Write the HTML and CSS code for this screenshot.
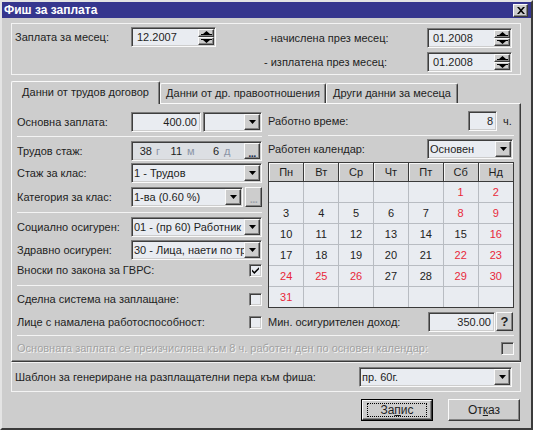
FILE: index.html
```html
<!DOCTYPE html>
<html>
<head>
<meta charset="utf-8">
<title>Фиш за заплата</title>
<link rel="stylesheet" href="styles.css">
</head>
<body>
<div class="window">
  <div class="titlebar">
    <span class="title">Фиш за заплата</span>
    <span class="close raised"><svg width="8" height="7" viewBox="0 0 8 7"><path d="M0 0h2l2 2.3L6 0h2L5 3.5 8 7H6L4 4.7 2 7H0l3-3.5z" fill="#000"/></svg></span>
  </div>
  <div class="content">
    <div class="group top-group">
      <div class="tg-left">
        <span class="lbl w116">Заплата за месец:</span>
        <div class="spin inset"><span class="spin-text">12.2007</span>
          <span class="spin-btns"><span class="raised half"><svg width="11" height="5"><path d="M0 3h11v1H0zM2 3l3.5-3L9 3z" fill="#000"/></svg></span><span class="raised half"><svg width="11" height="5"><path d="M0 0h11v1H0zM2 1l3.5 3L9 1z" fill="#000"/></svg></span></span>
        </div>
      </div>
      <div class="tg-right">
        <div class="tg-row">
          <span class="lbl w163">- начислена през месец:</span>
          <div class="spin inset"><span class="spin-text">01.2008</span>
            <span class="spin-btns"><span class="raised half"><svg width="11" height="5"><path d="M0 3h11v1H0zM2 3l3.5-3L9 3z" fill="#000"/></svg></span><span class="raised half"><svg width="11" height="5"><path d="M0 0h11v1H0zM2 1l3.5 3L9 1z" fill="#000"/></svg></span></span>
          </div>
        </div>
        <div class="tg-row">
          <span class="lbl w163">- изплатена през месец:</span>
          <div class="spin inset"><span class="spin-text">01.2008</span>
            <span class="spin-btns"><span class="raised half"><svg width="11" height="5"><path d="M0 3h11v1H0zM2 3l3.5-3L9 3z" fill="#000"/></svg></span><span class="raised half"><svg width="11" height="5"><path d="M0 0h11v1H0zM2 1l3.5 3L9 1z" fill="#000"/></svg></span></span>
          </div>
        </div>
      </div>
    </div>

    <div class="tabs">
      <div class="tab tab1 selected">Данни от трудов договор</div>
      <div class="tab tab2">Данни от др. правоотношения</div>
      <div class="tab tab3">Други данни за месеца</div>
    </div>

    <div class="panel">
      <div class="cols">
        <div class="lcol">
          <div class="row r20 mt8">
            <span class="lbl w114">Основна заплата:</span>
            <div class="field inset w70"><span class="num-r">400.00</span></div>
            <div class="combo inset w59 ml2"><span class="combo-text"></span><span class="arrow raised"><svg width="7" height="4"><path d="M0 0h7L3.5 4z" fill="#000"/></svg></span></div>
          </div>
          <div class="sep mt4 mb4"></div>
          <div class="row r20">
            <span class="lbl w114">Трудов стаж:</span>
            <div class="field inset stazh w131">
              <span class="n n1">38</span><span class="u u1">г</span>
              <span class="n n2">11</span><span class="u u2">м</span>
              <span class="n n3">6</span><span class="u u3">д</span>
              <span class="dots raised">...</span>
            </div>
          </div>
          <div class="row r20 mt2">
            <span class="lbl w114">Стаж за клас:</span>
            <div class="combo inset w131"><span class="combo-text">1 - Трудов</span><span class="arrow raised"><svg width="7" height="4"><path d="M0 0h7L3.5 4z" fill="#000"/></svg></span></div>
          </div>
          <div class="row r20 mt4">
            <span class="lbl w114">Категория за клас:</span>
            <div class="combo inset w112"><span class="combo-text">1-ва (0.60 %)</span><span class="arrow raised"><svg width="7" height="4"><path d="M0 0h7L3.5 4z" fill="#000"/></svg></span></div>
            <span class="dots-btn raised disabled ml2">...</span>
          </div>
          <div class="sep mt5 mb4"></div>
          <div class="row r20">
            <span class="lbl w114">Социално осигурен:</span>
            <div class="combo inset w131"><span class="combo-text">01 - (пр 60) Работник</span><span class="arrow raised"><svg width="7" height="4"><path d="M0 0h7L3.5 4z" fill="#000"/></svg></span></div>
          </div>
          <div class="row r20 mt3">
            <span class="lbl w114">Здравно осигурен:</span>
            <div class="combo inset w131"><span class="combo-text">30 - Лица, наети по тр</span><span class="arrow raised"><svg width="7" height="4"><path d="M0 0h7L3.5 4z" fill="#000"/></svg></span></div>
          </div>
          <div class="row r14 mt3 between">
            <span class="lbl">Вноски по закона за ГВРС:</span>
            <span class="check inset"><svg width="9" height="9" viewBox="0 0 9 9"><path d="M1 3.5l2.3 2.3L8 1.2v2L3.3 7.9 1 5.6z" fill="#000"/></svg></span>
          </div>
          <div class="sep mt8 mb6"></div>
          <div class="row r14 between">
            <span class="lbl">Сделна система на заплащане:</span>
            <span class="check inset"></span>
          </div>
          <div class="row r14 mt9 between">
            <span class="lbl">Лице с намалена работоспособност:</span>
            <span class="check inset"></span>
          </div>
        </div>

        <div class="rcol">
          <div class="row r20 mt7">
            <span class="lbl grow">Работно време:</span>
            <div class="field inset w29"><span class="num-r">8</span></div>
            <span class="unit-h">ч.</span>
          </div>
          <div class="sep mt4 mb3"></div>
          <div class="row r20">
            <span class="lbl grow">Работен календар:</span>
            <div class="combo inset w86 mr1"><span class="combo-text">Основен</span><span class="arrow raised"><svg width="7" height="4"><path d="M0 0h7L3.5 4z" fill="#000"/></svg></span></div>
          </div>
          <div class="cal mt3">
            <table>
              <thead>
                <tr><th>Пн</th><th>Вт</th><th>Ср</th><th>Чт</th><th>Пт</th><th>Сб</th><th>Нд</th></tr>
              </thead>
              <tbody>
                <tr><td></td><td></td><td></td><td></td><td></td><td class="h">1</td><td class="h">2</td></tr>
                <tr><td>3</td><td>4</td><td>5</td><td>6</td><td>7</td><td class="h">8</td><td class="h">9</td></tr>
                <tr><td>10</td><td>11</td><td>12</td><td>13</td><td>14</td><td>15</td><td class="h">16</td></tr>
                <tr><td>17</td><td>18</td><td>19</td><td>20</td><td>21</td><td class="h">22</td><td class="h">23</td></tr>
                <tr><td class="h">24</td><td class="h">25</td><td class="h">26</td><td>27</td><td>28</td><td class="h">29</td><td class="h">30</td></tr>
                <tr><td class="h">31</td><td></td><td></td><td></td><td></td><td></td><td></td></tr>
              </tbody>
            </table>
          </div>
          <div class="row r19 mt4">
            <span class="lbl grow">Мин. осигурителен доход:</span>
            <div class="field inset w67"><span class="num-r">350.00</span></div>
            <span class="q-btn raised mr1">?</span>
          </div>
        </div>
      </div>
      <div class="sep mt4 mb6"></div>
      <div class="row r13 between">
        <span class="lbl disabled-text">Основната заплата се преизчислява към 8 ч. работен ден по основен календар:</span>
        <span class="check inset check-disabled"></span>
      </div>
    </div>

    <div class="group bottom-group">
      <span class="lbl grow">Шаблон за генериране на разплащателни пера към фиша:</span>
      <div class="combo inset w153"><span class="combo-text">пр. 60г.</span><span class="arrow raised"><svg width="7" height="4"><path d="M0 0h7L3.5 4z" fill="#000"/></svg></span></div>
    </div>

    <div class="buttons">
      <div class="btn default"><span class="btn-inner raised"><span class="focus">За<u>п</u>ис</span></span></div>
      <div class="btn"><span class="btn-inner raised">От<u>к</u>аз</span></div>
    </div>
  </div>
</div>
</body>
</html>
```

FILE: styles.css
```css
* { box-sizing: border-box; }
html, body { margin: 0; padding: 0; }
body {
  width: 533px;
  height: 430px;
  overflow: hidden;
  background: #cdcdcd;
  font-family: "Liberation Sans", Arial, sans-serif;
  font-size: 11px;
  color: #1e1e1e;
}

.window {
  width: 533px;
  height: 430px;
  border: 2px solid;
  border-color: #e4e4e4 #3a3a3a #3a3a3a #e4e4e4;
  background: #cdcdcd;
  display: flex;
  flex-direction: column;
}

.titlebar {
  height: 16px;
  background: #36368e;
  display: flex;
  align-items: center;
  justify-content: space-between;
  padding: 0 3px 0 2px;
}
.title {
  color: #fff;
  font-weight: bold;
  font-size: 12px;
}
.close {
  width: 15px;
  height: 13px;
  display: flex;
  align-items: center;
  justify-content: center;
}

.raised {
  background: #cdcdcd;
  border: 1px solid;
  border-color: #fafafa #3a3a3a #3a3a3a #fafafa;
  box-shadow: inset -1px -1px #858585;
}
.inset {
  border: 1px solid;
  border-color: #7c7c7c #fafafa #fafafa #7c7c7c;
  box-shadow: inset 1px 1px #3e3e3e, inset -1px -1px #cdcdcd;
  padding: 1px;
  background: #e9ecf1;
}

.content {
  flex: 1;
  padding: 5px 10px 0 9px;
  display: flex;
  flex-direction: column;
}

.group {
  border: 1px solid #f3f3f3;
}
.top-group {
  height: 52px;
  display: flex;
}
.tg-left {
  width: 252px;
  padding: 3px 0 0 3px;
  display: flex;
  align-items: flex-start;
}
.tg-right {
  padding-top: 4px;
  display: flex;
  flex-direction: column;
  gap: 4px;
}
.tg-row { display: flex; }

.lbl {
  white-space: nowrap;
  line-height: 20px;
}
.w116 { width: 116px; flex: none; }
.w163 { width: 163px; flex: none; }
.w114 { width: 114px; flex: none; }
.grow { flex: 1; }

.spin {
  width: 85px;
  height: 20px;
  display: flex;
}
.spin-text {
  flex: 1;
  padding-left: 4px;
  line-height: 16px;
}
.spin-btns {
  width: 16px;
  display: flex;
  flex-direction: column;
}
.half {
  height: 8px;
  display: flex;
  align-items: center;
  justify-content: center;
}
.half svg { display: block; }

.tabs {
  margin-top: 6px;
  height: 22px;
  display: flex;
  align-items: flex-end;
}
.tab {
  height: 20px;
  border-top: 1px solid #fafafa;
  border-left: 1px solid #fafafa;
  border-right: 1px solid #3a3a3a;
  border-radius: 2px 2px 0 0;
  box-shadow: inset -1px 0 #858585;
  text-align: center;
  line-height: 19px;
  white-space: nowrap;
}
.tab1 { width: 149px; }
.tab2 { width: 166px; }
.tab3 { width: 132px; }
.tab.selected {
  height: 23px;
  margin-bottom: -1px;
  line-height: 21px;
  background: #cdcdcd;
  position: relative;
  z-index: 1;
}

.panel {
  height: 259px;
  border: 1px solid;
  border-color: #fafafa #3a3a3a #3a3a3a #fafafa;
  box-shadow: inset -1px -1px #858585;
  padding: 0 6px 0 5px;
}
.cols {
  display: grid;
  grid-template-columns: 245px 246px;
  column-gap: 6px;
  align-items: start;
}
.lcol, .rcol { display: flex; flex-direction: column; }

.row { display: flex; align-items: center; }
.r20 { height: 20px; }
.r19 { height: 19px; }
.r14 { height: 14px; }
.r13 { height: 13px; }
.between { justify-content: space-between; }

.mt2 { margin-top: 2px; }
.mt3 { margin-top: 3px; }
.mt4 { margin-top: 4px; }
.mt5 { margin-top: 5px; }
.mt7 { margin-top: 7px; }
.mt8 { margin-top: 8px; }
.mt9 { margin-top: 9px; }
.mb3 { margin-bottom: 3px; }
.mb4 { margin-bottom: 4px; }
.mb6 { margin-bottom: 6px; }
.ml2 { margin-left: 2px; }
.mr1 { margin-right: 1px; }

.sep {
  height: 1px;
  background: #f3f3f3;
}

.field {
  height: 20px;
  display: flex;
  align-items: center;
}
.num-r {
  flex: 1;
  text-align: right;
  padding-right: 2px;
}
.w70 { width: 70px; }
.w59 { width: 59px; }
.w131 { width: 131px; }
.w112 { width: 112px; }
.w29 { width: 29px; }
.w67 { width: 67px; }
.w86 { width: 86px; }
.w153 { width: 153px; }

.stazh {
  background: #dcdfe3;
  padding: 1px;
}
.n {
  display: inline-block;
  text-align: right;
  flex: none;
}
.u {
  display: inline-block;
  color: #8a94a6;
  flex: none;
}
.n1 { width: 19px; }
.u1 { width: 16px; padding-left: 4px; }
.n2 { width: 14px; }
.u2 { width: 23px; padding-left: 5px; }
.n3 { width: 14px; }
.u3 { width: 14px; padding-left: 5px; }
.dots {
  margin-left: auto;
  width: 16px;
  height: 16px;
  font-weight: bold;
  font-size: 11px;
  line-height: 18px;
  text-align: center;
  letter-spacing: -0.5px;
  overflow: hidden;
  color: #203050;
}
.dots-btn {
  width: 17px;
  height: 20px;
  flex: none;
  font-weight: bold;
  line-height: 22px;
  text-align: center;
  letter-spacing: -0.5px;
  overflow: hidden;
}
.dots-btn.disabled { color: #9ea3ab; }

.combo {
  height: 20px;
  display: flex;
  align-items: stretch;
  flex: none;
}
.combo-text {
  flex: 1;
  min-width: 0;
  overflow: hidden;
  white-space: nowrap;
  line-height: 16px;
  padding-left: 1px;
}
.arrow {
  width: 16px;
  flex: none;
  display: flex;
  align-items: center;
  justify-content: center;
}
.arrow svg { display: block; }

.check {
  width: 13px;
  height: 13px;
  flex: none;
  display: flex;
  align-items: center;
  justify-content: center;
  padding: 0;
}
.check svg { display: block; }
.check-disabled { background: #cdcdcd; }

.unit-h {
  width: 11px;
  margin-left: 6px;
  line-height: 20px;
}

.cal {
  border: 1px solid #3a3a3a;
  background: #e9ecf1;
}
.cal table {
  width: 100%;
  border-collapse: collapse;
  border-style: hidden;
  table-layout: fixed;
}
.cal th {
  height: 18px;
  padding: 0;
  font-weight: normal;
  background: #cdcdcd;
  border-right: 1px solid #3a3a3a;
  border-bottom: 1px solid #3a3a3a;
  box-shadow: inset 1px 1px #f6f6f6;
  text-align: center;
  line-height: 16px;
}
.cal td {
  height: 21px;
  padding: 0;
  text-align: center;
  line-height: 14px;
  border: 1px solid #b8bcc2;
  color: #222;
}
.cal td.h { color: #e8283a; }

.q-btn {
  width: 17px;
  height: 19px;
  flex: none;
  font-weight: bold;
  font-size: 13px;
  line-height: 17px;
  text-align: center;
  margin-left: 1px;
}

.disabled-text {
  color: #a2a2a2;
  text-shadow: 1px 1px 0 #f5f5f5;
  line-height: 13px;
}

.bottom-group {
  height: 30px;
  display: flex;
  align-items: center;
  padding: 0 8px 0 3px;
}

.buttons {
  margin-top: 7px;
  display: flex;
  justify-content: flex-end;
  gap: 15px;
  padding-right: 1px;
}
.btn {
  width: 72px;
  height: 22px;
  display: flex;
}
.btn-inner {
  flex: 1;
  display: flex;
  align-items: center;
  justify-content: center;
  font-size: 12px;
}
.btn.default {
  border: 1px solid #000;
}
.focus {
  border: 1px dotted #000;
  width: 60px;
  height: 14px;
  display: flex;
  align-items: center;
  justify-content: center;
}
```
